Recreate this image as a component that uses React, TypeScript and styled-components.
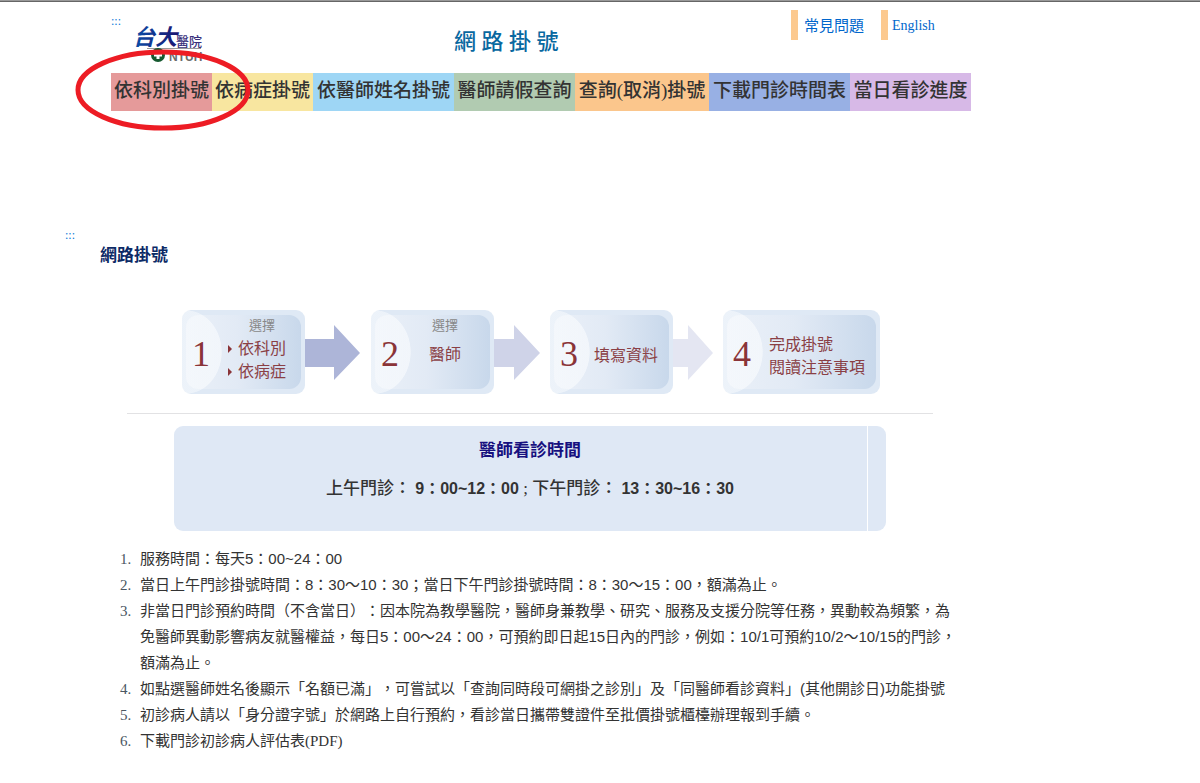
import React from 'react';
import styled, { createGlobalStyle } from 'styled-components';

const serif = '"Liberation Serif", "Noto Sans CJK TC", serif';
const sans = '"Liberation Sans", "Noto Sans CJK TC", sans-serif';

const GlobalStyle = createGlobalStyle`
  * { box-sizing: border-box; }
  body {
    margin: 0;
    background: #fff;
    color: #333;
    font-family: ${serif};
    font-size: 15px;
    text-spacing-trim: space-all;
  }
  a { text-decoration: none; color: inherit; }
`;

const TopRule = styled.div`
  height: 2px;
  background: #999;
  border-bottom: 1px solid #666;
`;

const Header = styled.header`
  position: relative;
  max-width: 971px;
  padding-left: 111px;
`;

const Masthead = styled.div`
  display: grid;
  grid-template-columns: 343px 1fr 180px;
  height: 71px;
`;

const Brand = styled.div`
  display: flex;
  padding-top: 12px;
`;

const SkipLink = styled.a`
  display: block;
  width: 22px;
  height: 14px;
  font-size: 12px;
  line-height: 14px;
  color: #0a78d8;
`;

const Logo = styled.svg`
  display: block;
  margin-top: 10px;
  overflow: visible;
`;

const SiteTitle = styled.h1`
  margin: 0;
  padding-top: 24px;
  font-size: 22px;
  line-height: 32px;
  font-weight: 500;
  color: #0868a0;
`;

const Links = styled.div`
  display: flex;
  align-items: flex-start;
  gap: 17px;
  padding-top: 8px;
`;

const TopLink = styled.a<{ $gap: number; $size: number }>`
  padding-top: 2px;
  padding-left: ${p => p.$gap}px;
  border-left: 7px solid #fcc98f;
  font-size: ${p => p.$size}px;
  line-height: 28px;
  color: #0066cc;
`;

const Nav = styled.nav`
  display: grid;
  grid-template-columns: 101fr 101fr 141fr 121fr 134fr 141fr 121fr;
`;

const Tab = styled.a<{ $color: string }>`
  background: ${p => p.$color};
  font-size: 19px;
  line-height: 35px;
  height: 38px;
  font-weight: 500;
  text-align: center;
  white-space: nowrap;
`;

const Marker = styled.svg`
  position: absolute;
  left: 74px;
  top: 47px;
  pointer-events: none;
`;

const Main = styled.main`
  max-width: 960px;
  padding: 117px 0 24px 65px;
`;

const SectionTitle = styled.h2`
  margin: 1px 0 41px 35px;
  font-size: 17px;
  line-height: 26px;
  font-weight: 700;
  color: #0c2a66;
`;

const Steps = styled.div`
  display: flex;
  align-items: center;
  margin-left: 117px;
`;

const StepBox = styled.div<{ $wide?: boolean }>`
  width: ${p => (p.$wide ? 157 : 123)}px;
  height: 84px;
  padding: 5px 4px;
  border-radius: 9px;
  background:
    radial-gradient(ellipse 36px 42px at 4px 50%, rgba(250, 252, 254, 0.5) 98%, transparent 100%),
    #dfe9f5;
`;

const StepInner = styled.div`
  display: flex;
  height: 74px;
  border-radius: 12px;
  background:
    radial-gradient(ellipse 36px 42px at 0 50%, rgba(250, 252, 254, 0.6) 98%, transparent 100%),
    linear-gradient(90deg, #eaf0f8, #e2eaf5 45%, #c8d8eb);
`;

const StepNumber = styled.div`
  width: 30px;
  font-size: 36px;
  line-height: 78px;
  text-align: center;
  color: #8a3438;
`;

const StepText = styled.div<{ $hinted?: boolean; $indent: number }>`
  display: flex;
  flex-direction: column;
  justify-content: ${p => (p.$hinted ? 'flex-start' : 'center')};
  padding-top: ${p => (p.$hinted ? 0 : 7)}px;
  padding-left: ${p => p.$indent}px;
  font-size: 16px;
  line-height: 23px;
  color: #8a3f45;
  white-space: nowrap;
`;

const Hint = styled.div<{ $indent: number; $gap: number }>`
  padding-left: ${p => p.$indent}px;
  margin-bottom: ${p => p.$gap}px;
  font-size: 13px;
  line-height: 22px;
  color: #888;
`;

const Choice = styled.div`
  display: flex;
  align-items: center;
  gap: 6px;

  &::before {
    content: '';
    border: 4px solid transparent;
    border-left-color: #8a3438;
    border-right-width: 0;
  }
`;

const Arrow = styled.svg<{ $gap: number }>`
  display: block;
  flex: none;
  margin-right: ${p => p.$gap}px;
`;

const Divider = styled.hr`
  height: 1px;
  margin: 19px 27px 12px 62px;
  border: 0;
  background: #e2e2e4;
`;

const Hours = styled.section`
  display: flex;
  margin: 0 74px 15px 109px;
  height: 105px;
  border-radius: 9px;
  overflow: hidden;
  text-align: center;
  background: #dfe8f5;
`;

const HoursBody = styled.div`
  flex: 1;
  padding: 12px 0 0 19px;
  border-right: 1px solid #fff;
`;

const HoursEdge = styled.div`
  width: 18px;
`;

const HoursTitle = styled.h3`
  margin: 0 0 12px;
  font-size: 17px;
  line-height: 26px;
  font-weight: 700;
  color: #17107f;
`;

const HoursLine = styled.p`
  margin: 0;
  font-size: 17px;
  line-height: 26px;
  font-weight: 500;
`;

const Time = styled.b`
  font-family: ${sans};
  font-size: 16px;
`;

const Notes = styled.ol`
  margin: 0;
  padding-left: 70px;
  line-height: 26px;

  li::marker {
    font-family: ${serif};
    color: #4a5662;
  }
`;

const Note = styled.li<{ $serif?: boolean }>`
  padding-left: 5px;
  font-family: ${p => (p.$serif ? serif : sans)};
`;

const tabs = [
  { label: '依科別掛號', color: '#e59a9a' },
  { label: '依病症掛號', color: '#f8e6a0' },
  { label: '依醫師姓名掛號', color: '#9ed6f5' },
  { label: '醫師請假查詢', color: '#b1cbb1' },
  { label: '查詢(取消)掛號', color: '#fbc68c' },
  { label: '下載門診時間表', color: '#98b0e4' },
  { label: '當日看診進度', color: '#d7b9e7' },
];

function FlowArrow({ width, head, color, gap }: { width: number; head: number; color: string; gap: number }) {
  return (
    <Arrow $gap={gap} width={width} height="56" viewBox={`0 0 ${width} 56`} aria-hidden="true">
      <path d={`M0 15H${head}V1L${width} 29L${head} 56V43H0Z`} fill={color} />
    </Arrow>
  );
}

function HospitalLogo() {
  return (
    <Logo width="72" height="44" viewBox="0 0 72 44" role="img" aria-label="台大醫院 NTUH">
      <defs>
        <linearGradient id="ink" x1="0" x2="1">
          <stop offset="0" stopColor="#0a4fa8" />
          <stop offset="1" stopColor="#1a1470" />
        </linearGradient>
      </defs>
      <text x="0" y="21" fontFamily="Noto Sans CJK TC, sans-serif" fontSize="22" fontWeight="700" fontStyle="italic" fill="url(#ink)">台大</text>
      <text x="43" y="22" fontFamily="Noto Sans CJK TC, sans-serif" fontSize="13" fontWeight="500" fill="#38307c">醫院</text>
      <path d="M14 24.500H68" stroke="#999" strokeWidth="1" />
      <circle cx="25" cy="31" r="7" fill="#15592f" />
      <path d="M25 27V35M21 31H29" stroke="#fff" strokeWidth="3" />
      <text x="36" y="37" fontFamily="Liberation Sans, sans-serif" fontSize="12" fontWeight="700" fill="#6b6b6b">NTUH</text>
    </Logo>
  );
}

export default function App() {
  return (
    <>
      <GlobalStyle />
      <TopRule />
      <Header>
        <Masthead>
          <Brand>
            <SkipLink href="#nav">:::</SkipLink>
            <HospitalLogo />
          </Brand>
          <SiteTitle>網 路 掛 號</SiteTitle>
          <Links>
            <TopLink href="#faq" $gap={6} $size={15}>常見問題</TopLink>
            <TopLink href="#english" $gap={4} $size={14}>English</TopLink>
          </Links>
        </Masthead>
        <Nav id="nav">
          {tabs.map(t => (
            <Tab key={t.label} href="#tab" $color={t.color}>{t.label}</Tab>
          ))}
        </Nav>
        <Marker width="178" height="84" viewBox="0 0 178 84" aria-hidden="true">
          <ellipse cx="89" cy="41" rx="85" ry="38" fill="none" stroke="#ed1c24" strokeWidth="5" />
        </Marker>
      </Header>

      <Main id="main">
        <SkipLink href="#main">:::</SkipLink>
        <SectionTitle>網路掛號</SectionTitle>

        <Steps>
          <StepBox>
            <StepInner>
              <StepNumber>1</StepNumber>
              <StepText $hinted $indent={12}>
                <Hint $indent={21} $gap={0}>選擇</Hint>
                <Choice>依科別</Choice>
                <Choice>依病症</Choice>
              </StepText>
            </StepInner>
          </StepBox>
          <FlowArrow width={55} head={29} color="#adb5d8" gap={11} />
          <StepBox>
            <StepInner>
              <StepNumber>2</StepNumber>
              <StepText $hinted $indent={24}>
                <Hint $indent={3} $gap={6}>選擇</Hint>
                <div>醫師</div>
              </StepText>
            </StepInner>
          </StepBox>
          <FlowArrow width={46} head={20} color="#cfd3e8" gap={10} />
          <StepBox>
            <StepInner>
              <StepNumber>3</StepNumber>
              <StepText $indent={10}>
                <div>填寫資料</div>
              </StepText>
            </StepInner>
          </StepBox>
          <FlowArrow width={40} head={15} color="#e4e6f2" gap={10} />
          <StepBox $wide>
            <StepInner>
              <StepNumber>4</StepNumber>
              <StepText $indent={12}>
                <div>完成掛號</div>
                <div>閱讀注意事項</div>
              </StepText>
            </StepInner>
          </StepBox>
        </Steps>

        <Divider />

        <Hours>
          <HoursBody>
            <HoursTitle>醫師看診時間</HoursTitle>
            <HoursLine>
              上午門診： <Time>9：00~12：00</Time> ; 下午門診： <Time>13：30~16：30</Time>
            </HoursLine>
          </HoursBody>
          <HoursEdge />
        </Hours>

        <Notes>
          <Note>服務時間：每天5：00~24：00</Note>
          <Note>當日上午門診掛號時間：8：30～10：30；當日下午門診掛號時間：8：30～15：00，額滿為止。</Note>
          <Note>
            非當日門診預約時間（不含當日）：因本院為教學醫院，醫師身兼教學、研究、服務及支援分院等任務，異動較為頻繁，為免醫師異動影響病友就醫權益，每日5：00～24：00，可預約即日起15日內的門診，例如：10/1可預約10/2～10/15的門診，額滿為止。
          </Note>
          <Note>如點選醫師姓名後顯示「名額已滿」，可嘗試以「查詢同時段可網掛之診別」及「同醫師看診資料」(其他開診日)功能掛號</Note>
          <Note>初診病人請以「身分證字號」於網路上自行預約，看診當日攜帶雙證件至批價掛號櫃檯辦理報到手續。</Note>
          <Note $serif>下載門診初診病人評估表(PDF)</Note>
        </Notes>
      </Main>
    </>
  );
}
